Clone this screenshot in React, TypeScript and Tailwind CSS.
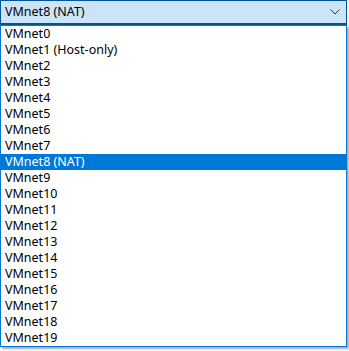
const items = [
  'VMnet0',
  'VMnet1 (Host-only)',
  'VMnet2',
  'VMnet3',
  'VMnet4',
  'VMnet5',
  'VMnet6',
  'VMnet7',
  'VMnet8 (NAT)',
  'VMnet9',
  'VMnet10',
  'VMnet11',
  'VMnet12',
  'VMnet13',
  'VMnet14',
  'VMnet15',
  'VMnet16',
  'VMnet17',
  'VMnet18',
  'VMnet19',
];

export default function App() {
  const selected = 'VMnet8 (NAT)';

  return (
    <div
      className="w-[349px] h-[351px] bg-white text-[12.5px] text-black"
      style={{ fontFamily: '"Noto Sans", "Open Sans", sans-serif' }}
    >
      <div className="flex h-[25px] w-[347px] items-center justify-between border border-b-2 border-[#005499] bg-[#cce4f7] pl-[4px] pr-[6px]">
        <span className="leading-[16px]">{selected}</span>
        <svg width="10" height="6" viewBox="0 0 10 6" className="text-[#333]">
          <path d="M0.5 0.5 L5 5 L9.5 0.5" fill="none" stroke="currentColor" strokeWidth="1" />
        </svg>
      </div>
      <div className="w-[347px] border border-[#0078d7] shadow-[2px_2px_2px_rgba(0,0,0,0.35)]">
        {items.map((item) => (
          <div
            key={item}
            className={`h-[16px] pl-[4px] leading-[16px] ${
              item === selected ? 'bg-[#0078d7] text-white' : ''
            }`}
          >
            {item}
          </div>
        ))}
      </div>
    </div>
  );
}
